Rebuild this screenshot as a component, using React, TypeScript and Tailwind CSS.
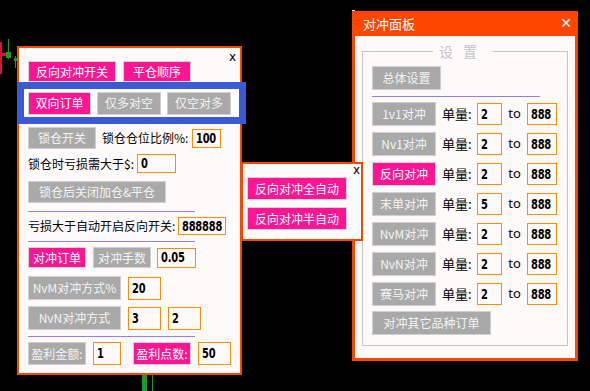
import React from 'react';

const cjk = "font-['Noto_Sans_CJK_SC','Microsoft_YaHei',sans-serif]";

function Btn({ children, pink, className }: { children: React.ReactNode; pink?: boolean; className?: string }) {
  const color = pink
    ? 'bg-[#ff1493] border-[#d4d4d4] text-white'
    : 'bg-[#a9a9a9] border-[#cfcfcf] text-[#f4f4f4]';
  return (
    <div className={`flex shrink-0 items-center justify-center border text-[12px] leading-none whitespace-nowrap ${color} ${className ?? ''}`}>
      {children}
    </div>
  );
}

function Num({ v, className }: { v: string; className?: string }) {
  return (
    <div
      className={`flex shrink-0 items-center overflow-hidden border border-[#ff8c00] bg-[#fffafa] pl-[3px] font-['DejaVu_Sans_Condensed',sans-serif] text-[11px] font-bold leading-none tracking-[-0.2px] text-black ${className ?? ''}`}
    >
      <span className="inline-block scale-y-[1.2]">{v}</span>
    </div>
  );
}

function Line({ className }: { className?: string }) {
  return <div className={`h-px bg-[#8c80f2] ${className ?? ''}`} />;
}

// left settings window
function LeftPanel() {
  return (
    <div className={`absolute left-[17px] top-[46px] h-[329px] w-[225px] border-2 border-[#ff4500] bg-[#fffafa] ${cjk}`}>
      <div className="absolute right-[4px] top-[0px] font-['DejaVu_Sans',sans-serif] text-[12px] text-black">x</div>
      <div className="flex flex-col pl-[9px] text-[12px] text-black">
        <div className="mt-[13px] flex h-[21px] gap-[7px]">
          <Btn pink className="w-[88px]">反向对冲开关</Btn>
          <Btn pink className="w-[68px]">平仓顺序</Btn>
        </div>

        <div className="ml-[-11px] flex h-[42px] w-[229px] items-center gap-[6px] border-[7px] border-[#3a5bd5] bg-white pl-[4px]">
          <Btn pink className="h-[23px] w-[63px]">双向订单</Btn>
          <Btn className="h-[23px] w-[64px]">仅多对空</Btn>
          <Btn className="h-[23px] w-[64px]">仅空对多</Btn>
        </div>

        <div className="mt-[3px] flex h-[22px] items-center">
          <Btn className="h-[22px] w-[68px]">锁仓开关</Btn>
          <span className="ml-[6px] w-[90px]">锁仓仓位比例%:</span>
          <Num v="100" className="h-[19px] w-[29px]" />
        </div>

        <div className="mt-[5px] flex h-[19px] items-center">
          <span className="w-[109px]">锁仓时亏损需大于$:</span>
          <Num v="0" className="h-[19px] w-[39px]" />
        </div>

        <div className="mt-[8px] flex h-[22px]">
          <Btn className="w-[138px]">锁仓后关闭加仓&amp;平仓</Btn>
        </div>

        <Line className="mt-[8px] w-[167px]" />

        <div className="mt-[5px] flex h-[18px] items-center">
          <span className="w-[150px]">亏损大于自动开启反向开关:</span>
          <Num v="888888" className="h-[18px] w-[48px]" />
        </div>

        <Line className="mt-[6px] w-[167px]" />

        <div className="mt-[5px] flex h-[21px] items-center gap-[7px]">
          <Btn pink className="h-[21px] w-[58px]">对冲订单</Btn>
          <Btn className="h-[21px] w-[58px]">对冲手数</Btn>
          <Num v="0.05" className="ml-[-1px] h-[20px] w-[39px]" />
        </div>

        <div className="mt-[8px] flex h-[24px] items-center gap-[7px]">
          <Btn className="h-[24px] w-[93px]">NvM对冲方式%</Btn>
          <Num v="20" className="h-[23px] w-[33px]" />
        </div>

        <div className="mt-[6px] flex h-[24px] items-center gap-[7px]">
          <Btn className="h-[24px] w-[93px]">NvN对冲方式</Btn>
          <Num v="3" className="h-[23px] w-[33px]" />
          <Num v="2" className="h-[23px] w-[33px]" />
        </div>

        <Line className="mt-[6px] w-[167px]" />

        <div className="mt-[5px] flex h-[23px] items-center">
          <Btn className="h-[23px] w-[58px]">盈利金额:</Btn>
          <Num v="1" className="ml-[7px] h-[23px] w-[28px]" />
          <Btn pink className="ml-[12px] h-[23px] w-[58px]">盈利点数:</Btn>
          <Num v="50" className="ml-[7px] h-[23px] w-[33px]" />
        </div>
      </div>
    </div>
  );
}

// small auto popup
function AutoPanel() {
  return (
    <div className={`absolute left-[241px] top-[162px] h-[79px] w-[122px] border-2 border-[#ff4500] bg-[#fffafa] ${cjk}`}>
      <div className="absolute right-[1px] top-[-3px] font-['DejaVu_Sans',sans-serif] text-[12px] text-black">x</div>
      <div className="flex flex-col gap-[7px] pl-[4px] pt-[13px]">
        <Btn pink className="h-[23px] w-[100px]">反向对冲全自动</Btn>
        <Btn pink className="h-[23px] w-[100px]">反向对冲半自动</Btn>
      </div>
    </div>
  );
}

const rows = [
  { name: '1v1对冲', min: '2' },
  { name: 'Nv1对冲', min: '2' },
  { name: '反向对冲', min: '2', pink: true },
  { name: '末单对冲', min: '5' },
  { name: 'NvM对冲', min: '2' },
  { name: 'NvN对冲', min: '2' },
  { name: '赛马对冲', min: '2' },
];

function HedgePanel() {
  return (
    <div className={`absolute left-[352px] top-[11px] flex h-[350px] w-[226px] flex-col ${cjk}`}>
      <div className="flex h-[25px] items-center justify-between bg-[#ff4500] pl-[11px] pr-[6px] text-[13px] text-white">
        <span>对冲面板</span>
        <span className="font-['DejaVu_Sans',sans-serif] text-[14px] font-bold">✕</span>
      </div>
      <div className="flex-1 border-x-[3px] border-b-[3px] border-[#ff4500] bg-[#fffafa] pl-[7px] pt-[15px]">
        <div className="relative h-[295px] w-[206px] border border-[#c4c4c4]">
          <div className="absolute left-[70px] top-[-10px] bg-[#fffafa] px-[6px] text-[14px] leading-[18px] tracking-[10px] text-[#c4c4c4]">
            设置
          </div>
          <div className="flex flex-col pl-[9px] pt-[14px] text-[12px] text-black">
            <Btn className="h-[24px] w-[69px]">总体设置</Btn>
            <Line className="mt-[6px] w-[168px]" />
            <div className="mt-[5px] flex flex-col gap-[6px]">
              {rows.map((r) => (
                <div key={r.name} className="flex h-[24px] items-center">
                  <Btn pink={r.pink} className="h-[24px] w-[64px]">{r.name}</Btn>
                  <span className="ml-[6px] w-[35px] text-[13px]">单量:</span>
                  <Num v={r.min} className="h-[22px] w-[25px]" />
                  <span className="w-[25px] text-center font-['Noto_Sans',sans-serif] text-[13px]">to</span>
                  <Num v="888" className="h-[22px] w-[30px]" />
                </div>
              ))}
            </div>
            <Btn className="mt-[5px] h-[24px] w-[119px]">对冲其它品种订单</Btn>
          </div>
        </div>
      </div>
    </div>
  );
}

// bits of the price chart behind the windows
function ChartBits() {
  return (
    <>
      <div className="absolute left-0 top-[42px] h-[32px] w-[2px] bg-[#e0103c]" />
      <div className="absolute left-[2px] top-[53px] h-[3px] w-[5px] bg-[#e0103c]" />
      <div className="absolute left-[8px] top-[39px] h-[20px] w-px bg-[#1e9a2a]" />
      <div className="absolute left-[6px] top-[52px] h-[6px] w-[5px] bg-[#1e9a2a]" />
      <div className="absolute left-[15px] top-[56px] h-[12px] w-px bg-[#1e9a2a]" />
      <div className="absolute left-[14px] top-[58px] h-[3px] w-[3px] bg-[#1e9a2a]" />
      <div className="absolute left-[142px] top-[375px] h-[16px] w-[5px] bg-[#1e9a2a]" />
      <div className="absolute left-[152px] top-[375px] h-[16px] w-px bg-[#1e9a2a]" />
      <div className="absolute left-[352px] top-[10px] h-px w-[3px] bg-white" />
      <div className="absolute left-[352px] top-[10px] h-[3px] w-px bg-white" />
    </>
  );
}

export default function App() {
  return (
    <div className="relative h-[391px] w-[590px] overflow-hidden bg-black">
      <ChartBits />
      <LeftPanel />
      <HedgePanel />
      <AutoPanel />
    </div>
  );
}
